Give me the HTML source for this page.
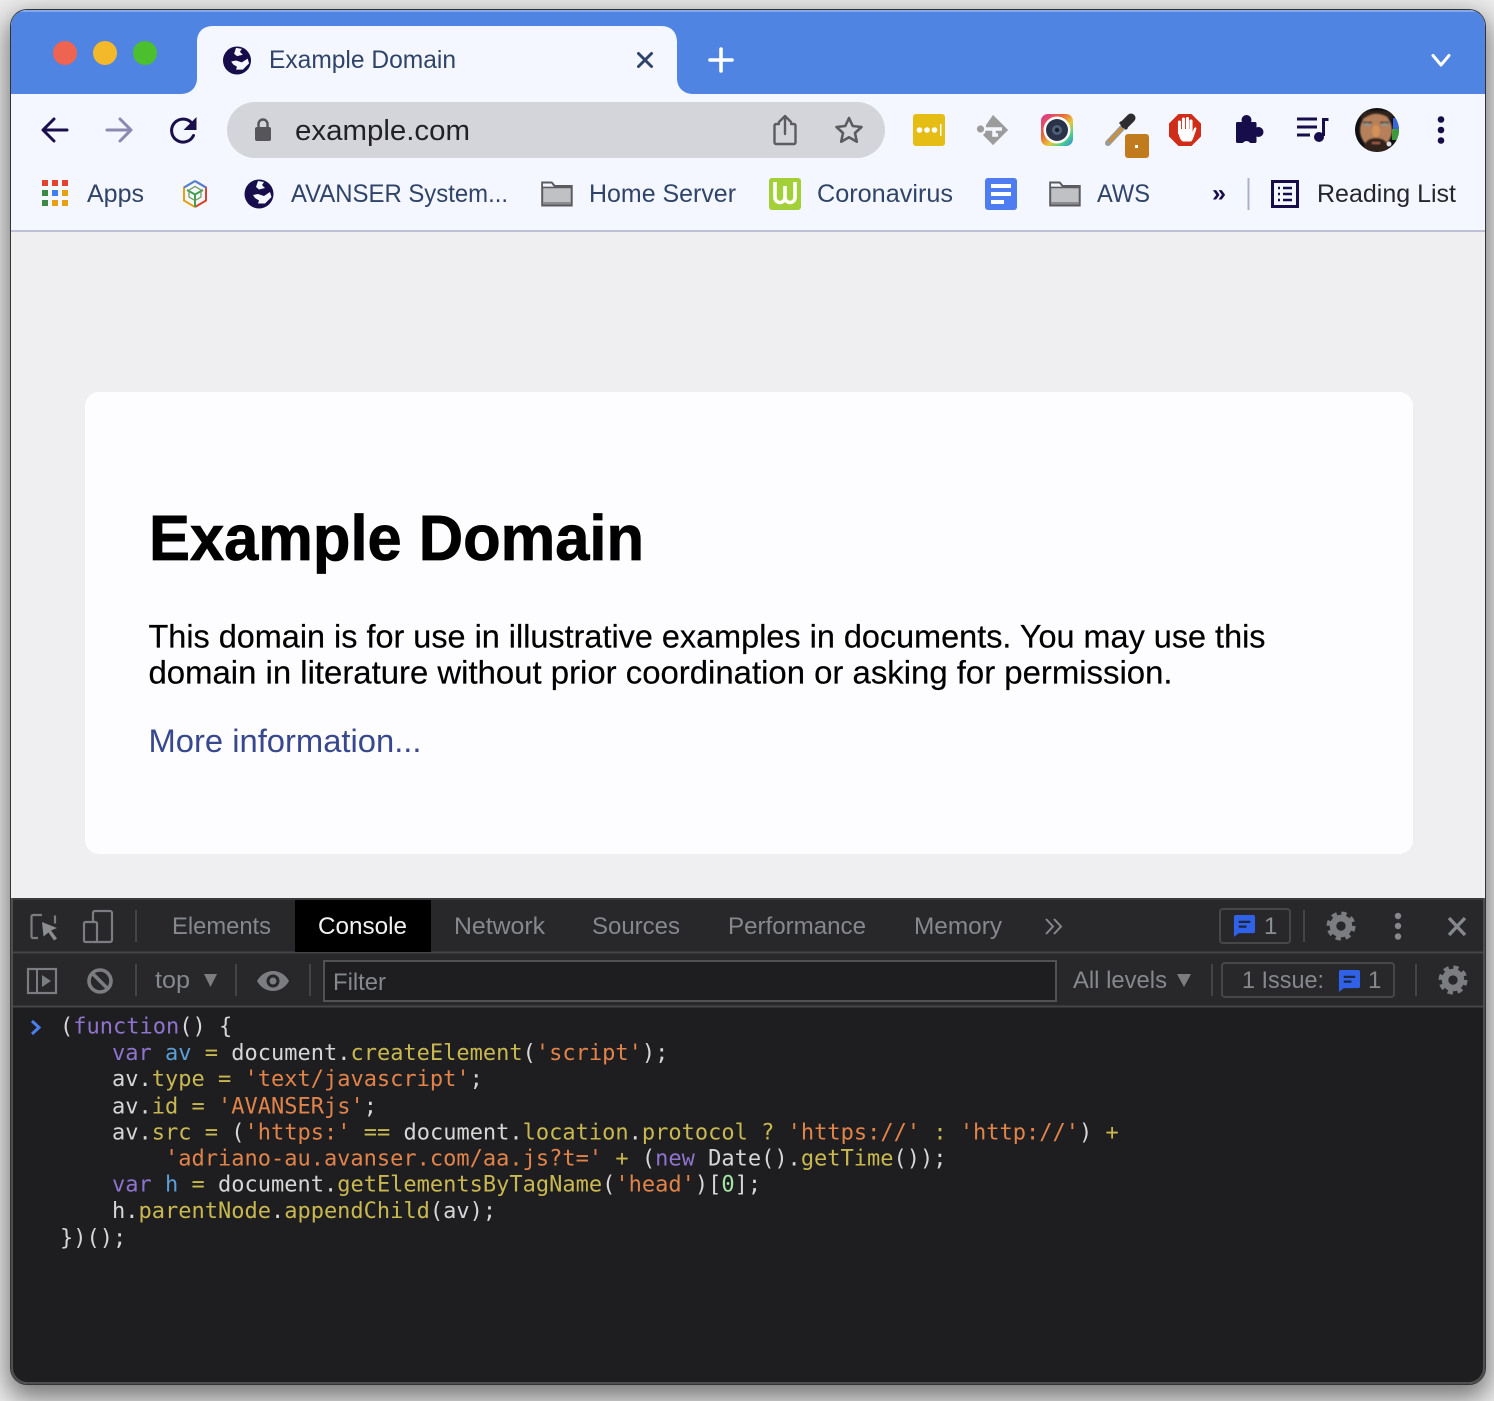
<!DOCTYPE html>
<html lang="en"><head><meta charset="utf-8"><title>Example Domain</title>
<style>
html,body{margin:0;padding:0;width:1494px;height:1401px;overflow:hidden;background:#ececec}
#shadow{position:absolute;left:11px;top:10px;width:1474px;height:1374px;border-radius:16px;box-shadow:0 0 0 1px #333,0 10px 26px 4px rgba(0,0,0,.5)}
svg{position:absolute;left:0;top:0;display:block}
text{font-family:"Liberation Sans",sans-serif;white-space:pre}
.ui{font-size:25px;fill:#2f4468}
.dt{font-size:24px;fill:#85888d}
.code{font-family:"DejaVu Sans Mono","Liberation Mono",monospace;font-size:22px;fill:#d6d6d6}
.k{fill:#8f74cf}.v{fill:#5a9fd6}.p{fill:#c9b850}.s{fill:#e2834a}.n{fill:#a5e3a5}
</style></head><body>
<div id="shadow"></div>
<svg width="1494" height="1401" viewBox="0 0 1494 1401" xmlns="http://www.w3.org/2000/svg">
<defs>
<clipPath id="win"><rect x="11" y="10" width="1474" height="1374" rx="16"/></clipPath>
<clipPath id="av"><circle cx="1377" cy="130" r="22"/></clipPath>
<filter id="soft" x="-10%" y="-10%" width="120%" height="120%"><feGaussianBlur stdDeviation="0.8"/></filter>
<linearGradient id="rb" x1="0" y1="0" x2="1" y2="1"><stop offset="0" stop-color="#d8339f"/><stop offset=".35" stop-color="#e8643a"/><stop offset=".6" stop-color="#e6c83a"/><stop offset=".8" stop-color="#45cf8c"/><stop offset="1" stop-color="#3a7fe8"/></linearGradient>
<symbol id="globe" viewBox="0 0 30 30"><circle cx="15" cy="15" r="14.500" fill="#170d4a"/><path d="M14 2l6 1-2 3 3 3-6 1.500-3-2.500zM9 16l5-1 6 2 6-4 1.500 5-6.500 6.500h-7l1-3-4-2.500z" fill="#f4f7ff"/></symbol>
<symbol id="folder" viewBox="0 0 32 26"><path d="M1.200 24.500V1.500h9.500l3 3.500h17v19.500z" fill="#c0c1c5" stroke="#5c5c60" stroke-width="2"/><path d="M2 6.500h28" stroke="#5c5c60" stroke-width="1.600"/><path d="M2 21h28v2.500H2z" fill="#8b8c90"/><path d="M2 2.500h8.300l2 3H2z" fill="#f4f7ff"/></symbol>
<symbol id="gear" viewBox="0 0 32 32"><circle cx="16" cy="16" r="8.500" fill="none" stroke="#7b7d80" stroke-width="7"/><circle cx="16" cy="16" r="13" fill="none" stroke="#7b7d80" stroke-width="5" stroke-dasharray="5.400 4.810"/></symbol>
<symbol id="bub" viewBox="0 0 24 24"><path d="M3 1h18a2 2 0 0 1 2 2v15a2 2 0 0 1-2 2H6l-5 4V3a2 2 0 0 1 2-2z" fill="#2f62e6"/><path d="M6 7h12v2.400H6zM6 12h8v2.400H6z" fill="#1d2540"/></symbol>
</defs>
<g clip-path="url(#win)">
<rect x="11" y="10" width="1474" height="1374" fill="#f4f7ff"/>
<rect x="11" y="10" width="1474" height="84" fill="#4f84e2"/>
<rect x="11" y="10" width="1474" height="2" fill="#86a8ea"/>
<path d="M181 94c10 0 16-7 16-16V42c0-10 6-16 16-16h448c10 0 16 6 16 16v36c0 9 6 16 16 16z" fill="#f4f7ff"/>
<circle cx="65" cy="53" r="12" fill="#ef6351"/><circle cx="105" cy="53" r="12" fill="#f4b82b"/><circle cx="145" cy="53" r="12" fill="#4cbf2e"/>
<use href="#globe" x="222" y="46" width="30" height="29"/>
<text x="269" y="68" class="ui" textLength="187" lengthAdjust="spacingAndGlyphs">Example Domain</text>
<path d="M638.500 53.500l13 13M651.500 53.500l-13 13" stroke="#2f4468" stroke-width="3" stroke-linecap="round"/>
<path d="M721 49v22M710 60h22" stroke="#fff" stroke-width="3.600" stroke-linecap="round"/>
<path d="M1433 55.500l8 9.500 8-9.500" fill="none" stroke="#fff" stroke-width="3" stroke-linecap="round" stroke-linejoin="round"/>

<!-- nav -->
<path d="M67 130H44M54 119l-11 11 11 11" fill="none" stroke="#1a0f4c" stroke-width="3" stroke-linecap="round" stroke-linejoin="round"/>
<path d="M107 130h23M120 119l11 11-11 11" fill="none" stroke="#8d88b0" stroke-width="3" stroke-linecap="round" stroke-linejoin="round"/>
<path d="M193.500 135.500a11.500 11.500 0 1 1-1-11.500" fill="none" stroke="#1a0f4c" stroke-width="3" stroke-linecap="round"/>
<path d="M196.500 117v13h-13z" fill="#1a0f4c"/>
<rect x="227" y="102" width="658" height="56" rx="28" fill="#d4d5da"/>
<rect x="255" y="127" width="16" height="14" rx="2" fill="#55555a"/>
<path d="M258.500 128v-4a4.500 4.500 0 0 1 9 0v4" fill="none" stroke="#55555a" stroke-width="2.400"/>
<text x="295" y="140" textLength="175" lengthAdjust="spacingAndGlyphs" style="font-size:29px;fill:#222226">example.com</text>
<path d="M779 124h-3a1.500 1.500 0 0 0-1.500 1.500v17a1.500 1.500 0 0 0 1.500 1.500h18a1.500 1.500 0 0 0 1.500-1.500v-17a1.500 1.500 0 0 0-1.500-1.500h-3M785 134v-18M779 122l6-6 6 6" fill="none" stroke="#5c5c60" stroke-width="2.400" stroke-linecap="round" stroke-linejoin="round"/>
<path d="M849 118l3.700 8 8.800 1-6.500 6 1.800 8.700-7.800-4.400-7.800 4.400 1.800-8.700-6.500-6 8.800-1z" fill="none" stroke="#5c5c60" stroke-width="2.600" stroke-linejoin="round"/>

<!-- extensions -->
<rect x="913" y="114" width="32" height="32" rx="3" fill="#e6bd14"/>
<circle cx="919.500" cy="130" r="2.800" fill="#fff"/><circle cx="927" cy="130" r="2.800" fill="#fff"/><circle cx="934.500" cy="130" r="2.800" fill="#fff"/><rect x="940" y="124" width="1.500" height="12" fill="#fff"/>
<path d="M993 115l15 15-15 15-10-10 10-10-3-3z" fill="#9c9c9c"/><path d="M986 125l7-10 15 15-15 15-8-10z" fill="#9c9c9c"/>
<path d="M983 129h19M994 129v6h4" fill="none" stroke="#f4f7ff" stroke-width="3.600"/><circle cx="980.500" cy="129" r="3.600" fill="#9c9c9c"/>
<rect x="1041" y="114" width="32" height="32" rx="7" fill="url(#rb)"/>
<circle cx="1057" cy="130" r="13.500" fill="#fff"/><circle cx="1057" cy="130" r="11" fill="#2a3348"/><circle cx="1057" cy="130" r="5" fill="#4f6078"/><circle cx="1057" cy="130" r="2.200" fill="#18202e"/>
<path d="M1108 143l15-16" stroke="#9a9a9a" stroke-width="6" stroke-linecap="round"/><path d="M1109 142l13-14" stroke="#d08e2c" stroke-width="2.600"/>
<path d="M1120 122l7 7" stroke="#2d2d30" stroke-width="3"/><path d="M1125 124l6-6" stroke="#2d2d30" stroke-width="9" stroke-linecap="round"/>
<rect x="1125" y="134" width="24" height="24" rx="3" fill="#c27a1e"/><rect x="1135" y="145" width="3" height="3" fill="#fff"/>
<path d="M1178.500 114h13l9.500 9.500v13l-9.500 9.500h-13l-9.500-9.500v-13z" fill="#d02c1a"/>
<path d="M1179.500 122v11M1183.500 119v12M1187.500 118.500v12M1191 121v11" stroke="#fff" stroke-width="3.100" stroke-linecap="round"/>
<path d="M1178 129h14.500v3l1.500-3.500c1-2 2.800-1 2.300.8l-2.300 6.700c-1 3-2 5-3 5.500h-8c-2-.8-3-3-4-6z" fill="#fff"/>
<rect x="1236" y="122" width="20.500" height="21" rx="1.500" fill="#170d4a"/><circle cx="1246.500" cy="120" r="5" fill="#170d4a"/><circle cx="1258.500" cy="132" r="5" fill="#170d4a"/><circle cx="1246.500" cy="145.500" r="4.500" fill="#f4f7ff"/><circle cx="1237" cy="132" r="0" fill="#f4f7ff"/>
<path d="M1297 119h20M1297 127h20M1297 135h13" stroke="#170d4a" stroke-width="3"/>
<path d="M1323.500 136v-16.500h5" fill="none" stroke="#170d4a" stroke-width="3"/><circle cx="1319" cy="137" r="5" fill="#170d4a"/>
<g clip-path="url(#av)"><rect x="1355" y="108" width="44" height="44" fill="#111114"/><rect x="1393" y="118" width="6" height="11" fill="#3868d8"/><rect x="1392" y="129" width="7" height="11" fill="#3d9a3a"/>
<g filter="url(#soft)"><ellipse cx="1376" cy="130" rx="16" ry="18" fill="#b5805a"/><path d="M1362 120c4-3 9-6 14-6 6 0 12 3 16 6l2-9h-36z" fill="#2e241c"/><ellipse cx="1376" cy="131" rx="4" ry="6" fill="#d58f58"/><path d="M1363 122.500h9M1380 122.500h9" stroke="#3a2820" stroke-width="1.600"/><ellipse cx="1367" cy="124.500" rx="3.500" ry="1.600" fill="#8e948f"/><ellipse cx="1385" cy="124.500" rx="3.500" ry="1.600" fill="#8e948f"/><path d="M1364 147c1-6 5-9 12-9s11 3 13 9l-4 5h-18z" fill="#30241e"/><rect x="1372" y="142" width="8" height="2" fill="#a2604a"/></g>
<circle cx="1389" cy="144" r="2.500" fill="#ddd"/></g>
<circle cx="1441" cy="119.500" r="3.300" fill="#170d4a"/><circle cx="1441" cy="130" r="3.300" fill="#170d4a"/><circle cx="1441" cy="140.500" r="3.300" fill="#170d4a"/>

<!-- bookmarks -->
<g>
<rect x="42" y="180" width="6" height="6" fill="#e2432f"/><rect x="52" y="180" width="6" height="6" fill="#e2432f"/><rect x="62" y="180" width="6" height="6" fill="#e2432f"/>
<rect x="42" y="190" width="6" height="6" fill="#3b8a44"/><rect x="52" y="190" width="6" height="6" fill="#3f7ef0"/><rect x="62" y="190" width="6" height="6" fill="#e5a113"/>
<rect x="42" y="200" width="6" height="6" fill="#3b8a44"/><rect x="52" y="200" width="6" height="6" fill="#e5a113"/><rect x="62" y="200" width="6" height="6" fill="#e5a113"/>
</g>
<text x="87" y="202" class="ui" textLength="57" lengthAdjust="spacingAndGlyphs">Apps</text>
<path d="M195 181l11 6.500v13l-11 6.500" fill="none" stroke="#d8432f" stroke-width="2"/><path d="M195 181l-11 6.500v13l11 6.500" fill="none" stroke="#e5a113" stroke-width="2"/><path d="M195 181l11 6.500M195 181l-11 6.500" stroke="#4a80d8" stroke-width="2"/><path d="M187 190l8 4.500 8-4.500M195 194.500V207" fill="none" stroke="#3fa050" stroke-width="2"/><path d="M189 190l6-3.500 6 3.500v7l-6 3.500-6-3.500z" fill="none" stroke="#6a9a50" stroke-width="1.200"/>
<use href="#globe" x="244" y="179" width="30" height="30"/>
<text x="291" y="202" class="ui" textLength="217" lengthAdjust="spacingAndGlyphs">AVANSER System...</text>
<use href="#folder" x="541" y="181" width="32" height="26"/>
<text x="589" y="202" class="ui" textLength="147" lengthAdjust="spacingAndGlyphs">Home Server</text>
<rect x="769" y="178" width="32" height="32" rx="3" fill="#a3d039"/>
<path d="M775 182v15.500a5 5 0 0 0 10 0V186v11.500a5 5 0 0 0 10 0V182" fill="none" stroke="#fff" stroke-width="3.600"/>
<text x="817" y="202" class="ui" textLength="136" lengthAdjust="spacingAndGlyphs">Coronavirus</text>
<rect x="985" y="178" width="32" height="32" rx="3" fill="#4d7df0"/>
<rect x="991" y="184" width="20" height="4" fill="#fff"/><rect x="991" y="192" width="20" height="4" fill="#fff"/><rect x="991" y="200" width="13" height="4" fill="#fff"/>
<use href="#folder" x="1049" y="181" width="32" height="26"/>
<text x="1097" y="202" class="ui" textLength="53" lengthAdjust="spacingAndGlyphs">AWS</text>
<text x="1212" y="201" style="font-size:24px;fill:#170d4a;font-weight:bold" textLength="14" lengthAdjust="spacingAndGlyphs">»</text>
<rect x="1247.500" y="178" width="2" height="32" fill="#aeb1c8"/>
<rect x="1272.500" y="181.500" width="25" height="25" fill="none" stroke="#170d4a" stroke-width="3"/>
<path d="M1278 188h2M1278 194h2M1278 200h2M1283 188h9M1283 194h9M1283 200h9" stroke="#170d4a" stroke-width="2.400"/>
<text x="1317" y="202" textLength="139" lengthAdjust="spacingAndGlyphs" style="font-size:25px;fill:#26262a">Reading List</text>
<rect x="11" y="230" width="1474" height="2" fill="#bdc0d6"/>

<!-- page -->
<rect x="11" y="232" width="1474" height="666" fill="#efeff1"/>
<rect x="85" y="392" width="1328" height="462" rx="14" fill="#fdfdff"/>
<text x="149" y="560" textLength="495" lengthAdjust="spacingAndGlyphs" style="font-size:64px;font-weight:bold;fill:#000;stroke:#000;stroke-width:.8px">Example Domain</text>
<text x="148.500" y="647.500" textLength="1117" lengthAdjust="spacingAndGlyphs" style="font-size:32px;fill:#000;stroke:#000;stroke-width:.2px">This domain is for use in illustrative examples in documents. You may use this</text>
<text x="148.500" y="683.500" textLength="1024" lengthAdjust="spacingAndGlyphs" style="font-size:32px;fill:#000;stroke:#000;stroke-width:.2px">domain in literature without prior coordination or asking for permission.</text>
<text x="148.500" y="752" textLength="273" lengthAdjust="spacingAndGlyphs" style="font-size:32px;fill:#38488f">More information...</text>

<!-- devtools -->
<rect x="11" y="898" width="1474" height="486" fill="#1e1e20"/>
<rect x="11" y="898" width="1474" height="108" fill="#28282b"/>
<rect x="11" y="898" width="1474" height="2" fill="#3a3a3d"/>
<rect x="11" y="951.500" width="1474" height="2" fill="#454548"/>
<rect x="11" y="1005.500" width="1474" height="2" fill="#454548"/>
<rect x="295" y="900" width="136" height="52" fill="#000"/>
<path d="M42 915H33a1.500 1.500 0 0 0-1.500 1.500v20a1.500 1.500 0 0 0 1.500 1.500h5M55 915.500v8" fill="none" stroke="#7b7d80" stroke-width="2.200"/>
<path d="M42 922l15 6-6 2.500 6 8-3 2-5.500-8-5 4z" fill="#8b8d90"/>
<rect x="93" y="911" width="19" height="31" rx="2" fill="none" stroke="#7b7d80" stroke-width="2.200"/>
<rect x="84" y="922" width="13" height="20" rx="1.500" fill="#28282b" stroke="#7b7d80" stroke-width="2.200"/>
<rect x="135" y="910" width="2" height="32" fill="#444447"/>
<text x="172" y="934" class="dt" textLength="99" lengthAdjust="spacingAndGlyphs">Elements</text>
<text x="318" y="934" class="dt" textLength="89" lengthAdjust="spacingAndGlyphs" style="fill:#f2f2f2">Console</text>
<text x="454" y="934" class="dt" textLength="91" lengthAdjust="spacingAndGlyphs">Network</text>
<text x="592" y="934" class="dt" textLength="88" lengthAdjust="spacingAndGlyphs">Sources</text>
<text x="728" y="934" class="dt" textLength="138" lengthAdjust="spacingAndGlyphs">Performance</text>
<text x="914" y="934" class="dt" textLength="88" lengthAdjust="spacingAndGlyphs">Memory</text>
<path d="M1046 919l7 7.500-7 7.500M1054 919l7 7.500-7 7.500" fill="none" stroke="#85888d" stroke-width="2"/>
<rect x="1220" y="909" width="70" height="34" rx="3" fill="none" stroke="#47474a" stroke-width="2"/>
<use href="#bub" x="1233" y="914" width="23" height="23"/>
<text x="1264" y="934" class="dt" style="fill:#8b8e92">1</text>
<rect x="1303" y="910" width="2" height="32" fill="#444447"/>
<use href="#gear" x="1326" y="911" width="30" height="30"/>
<circle cx="1398" cy="916" r="3.200" fill="#85888d"/><circle cx="1398" cy="926" r="3.200" fill="#85888d"/><circle cx="1398" cy="936.500" r="3.200" fill="#85888d"/>
<path d="M1449 918l16 17M1465 918l-16 17" stroke="#85888d" stroke-width="3.400"/>

<rect x="28" y="969" width="28" height="24" fill="none" stroke="#7b7d80" stroke-width="2.200"/><rect x="36" y="969" width="2" height="24" fill="#7b7d80"/><path d="M42 975l9 6-9 6z" fill="#7b7d80"/>
<circle cx="100" cy="981" r="11" fill="none" stroke="#7b7d80" stroke-width="3.600"/><path d="M92.500 973.500l15 15" stroke="#7b7d80" stroke-width="3.600"/>
<rect x="135" y="964" width="2" height="32" fill="#444447"/>
<text x="155" y="988" class="dt" textLength="35" lengthAdjust="spacingAndGlyphs">top</text>
<path d="M204 974h13l-6.500 13z" fill="#7b7d80"/>
<rect x="235" y="964" width="2" height="32" fill="#444447"/>
<path d="M257 981c4-7 10-10 16-10s12 3 16 10c-4 7-10 10-16 10s-12-3-16-10z" fill="#7b7d80"/><circle cx="273" cy="981" r="6.500" fill="#28282b"/><circle cx="273" cy="981" r="3.500" fill="#7b7d80"/>
<rect x="309" y="964" width="2" height="32" fill="#444447"/>
<rect x="324" y="961" width="732" height="40" fill="#1e1e20" stroke="#525255" stroke-width="2"/>
<text x="333" y="990" class="dt" textLength="53" lengthAdjust="spacingAndGlyphs">Filter</text>
<text x="1073" y="988" class="dt" textLength="94" lengthAdjust="spacingAndGlyphs">All levels</text>
<path d="M1177 974h14l-7 13z" fill="#7b7d80"/>
<rect x="1211" y="964" width="2" height="32" fill="#444447"/>
<rect x="1222" y="963" width="172" height="34" rx="3" fill="none" stroke="#47474a" stroke-width="2"/>
<text x="1242" y="988" class="dt" textLength="82" lengthAdjust="spacingAndGlyphs">1 Issue:</text>
<use href="#bub" x="1338" y="969" width="23" height="23"/>
<text x="1368" y="988" class="dt">1</text>
<rect x="1415" y="964" width="2" height="32" fill="#444447"/>
<use href="#gear" x="1438" y="965" width="30" height="30"/>

<path d="M32 1021l7 6.500-7 6.500" fill="none" stroke="#4a7ff0" stroke-width="3"/>
<text class="code" x="60" y="1033.500">(<tspan class="k">function</tspan>() {</text>
<text class="code" x="112" y="1060"><tspan class="k">var</tspan> <tspan class="v">av</tspan> <tspan class="p">=</tspan> document.<tspan class="p">createElement</tspan>(<tspan class="s">'script'</tspan>);</text>
<text class="code" x="112" y="1086">av.<tspan class="p">type</tspan> <tspan class="p">=</tspan> <tspan class="s">'text/javascript'</tspan>;</text>
<text class="code" x="112" y="1113.500">av.<tspan class="p">id</tspan> <tspan class="p">=</tspan> <tspan class="s">'AVANSERjs'</tspan>;</text>
<text class="code" x="112" y="1139.500">av.<tspan class="p">src</tspan> <tspan class="p">=</tspan> (<tspan class="s">'https:'</tspan> <tspan class="p">==</tspan> document.<tspan class="p">location</tspan>.<tspan class="p">protocol</tspan> <tspan class="p">?</tspan> <tspan class="s">'https://'</tspan> <tspan class="p">:</tspan> <tspan class="s">'http://'</tspan>) <tspan class="p">+</tspan></text>
<text class="code" x="165" y="1165.500"><tspan class="s">'adriano-au.avanser.com/aa.js?t='</tspan> <tspan class="p">+</tspan> (<tspan class="k">new</tspan> Date().<tspan class="p">getTime</tspan>());</text>
<text class="code" x="112" y="1191.500"><tspan class="k">var</tspan> <tspan class="v">h</tspan> <tspan class="p">=</tspan> document.<tspan class="p">getElementsByTagName</tspan>(<tspan class="s">'head'</tspan>)[<tspan class="n">0</tspan>];</text>
<text class="code" x="112" y="1218">h.<tspan class="p">parentNode</tspan>.<tspan class="p">appendChild</tspan>(av);</text>
<text class="code" x="60" y="1245">})();</text>
<path d="M12 898V1367.500a15.500 15.500 0 0 0 15.500 15.500H1468.500a15.500 15.500 0 0 0 15.500-15.500V898" fill="none" stroke="#4f4f52" stroke-width="2"/>
</g>
</svg>
</body></html>
